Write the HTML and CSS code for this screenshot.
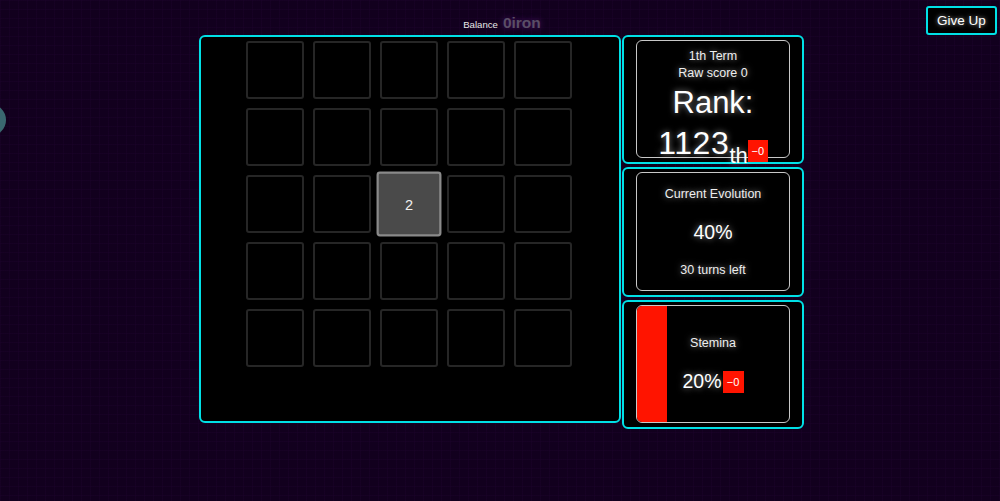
FILE: index.html
```html
<!DOCTYPE html>
<html lang="en">
<head>
<meta charset="utf-8">
<title>Evolution Game</title>
<link rel="stylesheet" href="styles.css">
</head>
<body>
<div class="orb"></div>
<button class="give-up">Give Up</button>
<header class="balance">
  <span class="balance-label">Balance</span>
  <span class="balance-value">0iron</span>
</header>
<main class="stage">
  <section class="board">
    <div class="grid">
      <div class="cell"></div><div class="cell"></div><div class="cell"></div><div class="cell"></div><div class="cell"></div>
      <div class="cell"></div><div class="cell"></div><div class="cell"></div><div class="cell"></div><div class="cell"></div>
      <div class="cell"></div><div class="cell"></div><div class="cell filled">2</div><div class="cell"></div><div class="cell"></div>
      <div class="cell"></div><div class="cell"></div><div class="cell"></div><div class="cell"></div><div class="cell"></div>
      <div class="cell"></div><div class="cell"></div><div class="cell"></div><div class="cell"></div><div class="cell"></div>
    </div>
  </section>
  <aside class="side">
    <div class="panel">
      <div class="inner rank-box">
        <div class="line small">1th Term</div>
        <div class="line small">Raw score 0</div>
        <div class="rank-title">Rank:</div>
        <div class="rank-value"><span class="num">1123</span><span class="suffix">th</span><span class="delta delta-rank">−0</span></div>
      </div>
    </div>
    <div class="panel">
      <div class="inner evo-box">
        <div class="line small">Current Evolution</div>
        <div class="mid">40%</div>
        <div class="line small">30 turns left</div>
      </div>
    </div>
    <div class="panel">
      <div class="inner stamina-box">
        <div class="stamina-bar" style="width:20%"></div>
        <div class="stamina-content">
          <div class="line small">Stemina</div>
          <div class="mid"><span>20%</span><span class="delta delta-stam">−0</span></div>
        </div>
      </div>
    </div>
  </aside>
</main>
</body>
</html>
```
FILE: styles.css
```css
* { box-sizing: border-box; }
html, body { height: 100%; }
body {
  margin: 0;
  background-color: #12001e;
  background-image:
    linear-gradient(to right, rgba(70, 20, 100, 0.08) 1px, transparent 1px),
    linear-gradient(to bottom, rgba(70, 20, 100, 0.08) 1px, transparent 1px);
  background-size: 9px 9px;
  font-family: "Liberation Sans", Arial, sans-serif;
  color: #fff;
  overflow: hidden;
}
.orb {
  position: absolute;
  left: -26px;
  top: 104px;
  width: 32px;
  height: 32px;
  border-radius: 50%;
  background: #3a6870;
}
.give-up {
  position: absolute;
  top: 6px;
  right: 3px;
  width: 71px;
  height: 29px;
  background: #000;
  color: #fff;
  border: 2px solid #00e0e6;
  border-radius: 3px;
  font-family: "Liberation Sans", Arial, sans-serif;
  font-size: 13.5px;
  padding: 0;
  text-shadow: 0 0 4px rgba(255,255,255,0.7);
}
.balance {
  height: 35px;
  display: flex;
  justify-content: center;
  align-items: flex-end;
  gap: 5px;
  padding-bottom: 4px;
  padding-left: 4px;
}
.balance-label {
  font-size: 9.6px;
  color: #e8e8e8;
  line-height: 13px;
}
.balance-value {
  font-size: 15.5px;
  font-weight: bold;
  color: #5a4e66;
  line-height: 17px;
  text-shadow: 0 0 6px rgba(110, 40, 150, 0.6);
}
.stage {
  display: flex;
  justify-content: center;
  align-items: flex-start;
  gap: 1px;
  padding-left: 3px;
}
.board {
  width: 422px;
  height: 388px;
  background: #000;
  border: 2px solid #00e0e6;
  border-radius: 6px;
  display: flex;
  justify-content: center;
  padding-top: 4px;
  padding-right: 2px;
}
.grid {
  display: grid;
  grid-template-columns: repeat(5, 58px);
  grid-auto-rows: 58px;
  gap: 9px;
  align-content: start;
}
.cell {
  border: 2px solid #262626;
  border-radius: 3px;
  background: #000;
}
.cell.filled {
  background: #4a4a4a;
  border-color: #8a8a8a;
  display: flex;
  align-items: center;
  justify-content: center;
  font-size: 13px;
  color: #f0f0f0;
  transform: scale(1.12);
}
.side {
  width: 182px;
  display: flex;
  flex-direction: column;
  gap: 3px;
}
.panel {
  height: 129px;
  background: #000;
  border: 2px solid #00e0e6;
  border-radius: 6px;
  padding: 3px 12px 4px 12px;
}
.panel:nth-child(2) { height: 130px; }
.inner {
  height: 100%;
  border: 1px solid #c8c8c8;
  border-radius: 6px;
  text-shadow: 0 0 6px rgba(255,255,255,0.55);
}
.line.small {
  font-size: 12.5px;
  text-align: center;
  color: #eee;
}
.rank-box {
  display: flex;
  flex-direction: column;
  align-items: center;
  padding-top: 7px;
}
.rank-box .line.small { line-height: 17px; }
.rank-title {
  font-size: 31px;
  line-height: 32px;
  margin-top: 5px;
}
.rank-value {
  display: flex;
  align-items: flex-end;
  margin-top: 9px;
  height: 30px;
  flex: none;
}
.rank-value .num {
  font-size: 32px;
  line-height: 30px;
  letter-spacing: 0.6px;
}
.rank-value .suffix {
  font-size: 22px;
  line-height: 18px;
  margin-bottom: -7px;
}
.delta {
  background: #ff1400;
  color: #fff;
  text-shadow: none;
  display: inline-flex;
  align-items: center;
  justify-content: center;
}
.delta-rank {
  width: 20px;
  height: 22px;
  font-size: 11px;
  margin-bottom: -4px;
}
.evo-box {
  display: flex;
  flex-direction: column;
  align-items: center;
  justify-content: space-between;
  padding: 14px 0 13px;
}
.mid {
  font-size: 19.5px;
  display: flex;
  align-items: center;
  justify-content: center;
}
.stamina-box {
  position: relative;
  overflow: hidden;
}
.stamina-bar {
  position: absolute;
  left: 0;
  top: 0;
  bottom: 0;
  background: #ff1400;
}
.stamina-content {
  position: relative;
  height: 100%;
  display: flex;
  flex-direction: column;
  align-items: center;
  padding-top: 30px;
  gap: 20px;
}
.delta-stam {
  width: 21px;
  height: 22px;
  font-size: 11px;
  margin-left: 1px;
}
```
